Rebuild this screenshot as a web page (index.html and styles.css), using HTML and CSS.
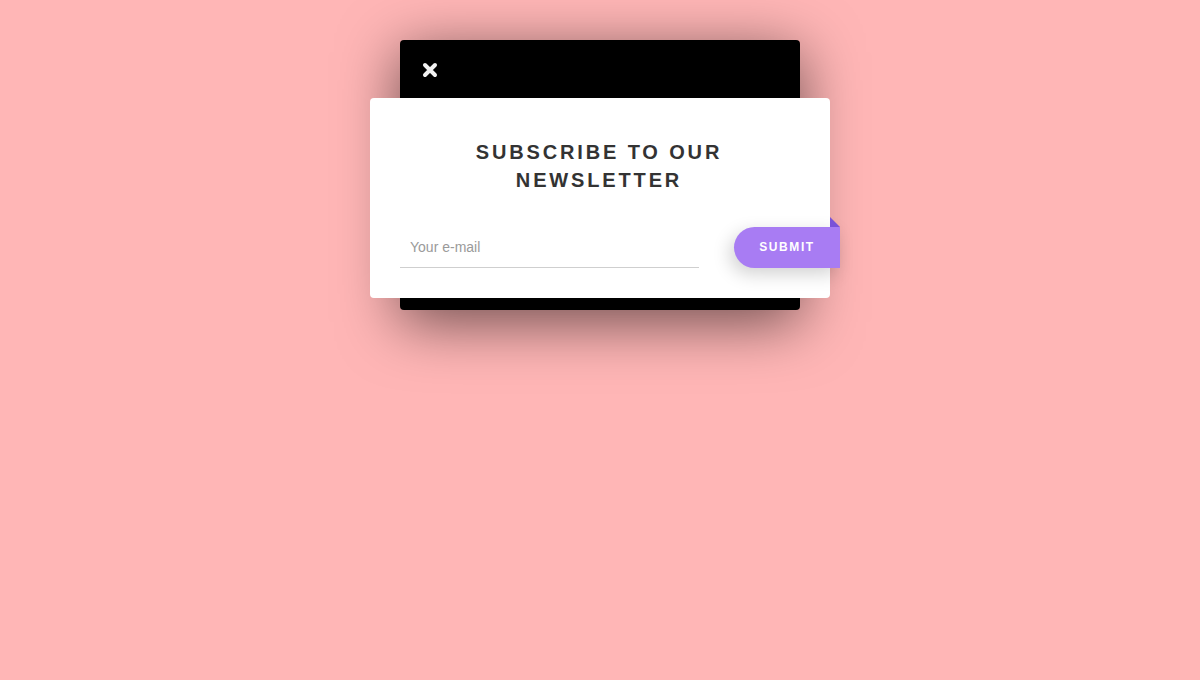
FILE: index.html
```html
<!DOCTYPE html>
<html lang="en">
<head>
<meta charset="utf-8">
<title>Subscribe</title>
<link rel="stylesheet" href="styles.css">
</head>
<body>
  <div class="modal">
    <div class="modal-head">
      <button class="close" aria-label="Close">
        <svg width="16" height="16" viewBox="0 0 16 16"><path d="M3 3L13 13M13 3L3 13" stroke="#f2f2f2" stroke-width="4" stroke-linecap="round" fill="none"/></svg>
      </button>
    </div>
    <div class="card">
      <h2 class="title">SUBSCRIBE TO OUR NEWSLETTER</h2>
      <form class="row">
        <input class="email" type="email" placeholder="Your e-mail">
        <button class="submit" type="button">SUBMIT</button>
      </form>
    </div>
  </div>
</body>
</html>
```

FILE: styles.css
```css
* { box-sizing: border-box; }
html, body { margin: 0; height: 100%; }
body {
  background: #ffb6b6;
  font-family: "Liberation Sans", Arial, sans-serif;
  padding-top: 40px;
}
.modal {
  width: 400px;
  margin: 0 auto;
  background: #000;
  border-radius: 4px;
  padding-bottom: 12px;
  box-shadow: 0 12px 60px rgba(0, 0, 0, 0.58);
}
.modal-head {
  height: 58px;
  padding: 22px 0 0 22px;
}
.close {
  display: block;
  width: 16px;
  height: 16px;
  padding: 0;
  border: 0;
  background: none;
  cursor: pointer;
}
.close svg { display: block; }
.card {
  margin: 0 -30px;
  background: #fff;
  border-radius: 4px;
  padding: 40px 30px 30px;
}
.title {
  margin: 0 0 33px;
  text-align: center;
  font-size: 20px;
  line-height: 28px;
  font-weight: 700;
  letter-spacing: 2.85px;
  color: #333;
  padding: 0 62px 0 60px;
}
.row {
  display: flex;
  align-items: flex-start;
  margin: 0;
}
.email {
  flex: 0 0 299px;
  height: 41px;
  border: 0;
  border-bottom: 1px solid #cfcfcf;
  padding: 0 10px;
  font-family: inherit;
  font-size: 14px;
  color: #333;
  outline: none;
  background: transparent;
}
.email::placeholder { color: #9a9a9a; }
.submit {
  position: relative;
  margin-left: auto;
  margin-right: -40px;
  width: 106px;
  height: 41px;
  border: 0;
  border-radius: 21px 0 0 21px;
  background: #a87cf3;
  color: #fff;
  font-family: inherit;
  font-size: 12px;
  font-weight: 700;
  letter-spacing: 1.6px;
  padding: 0 0 1px 0;
  box-shadow: -4px 6px 18px rgba(0, 0, 0, 0.18);
  cursor: pointer;
}
.submit::before {
  content: "";
  position: absolute;
  right: 0;
  top: -10px;
  width: 0;
  height: 0;
  border-left: 10px solid #7a52d8;
  border-top: 10px solid transparent;
}
```
